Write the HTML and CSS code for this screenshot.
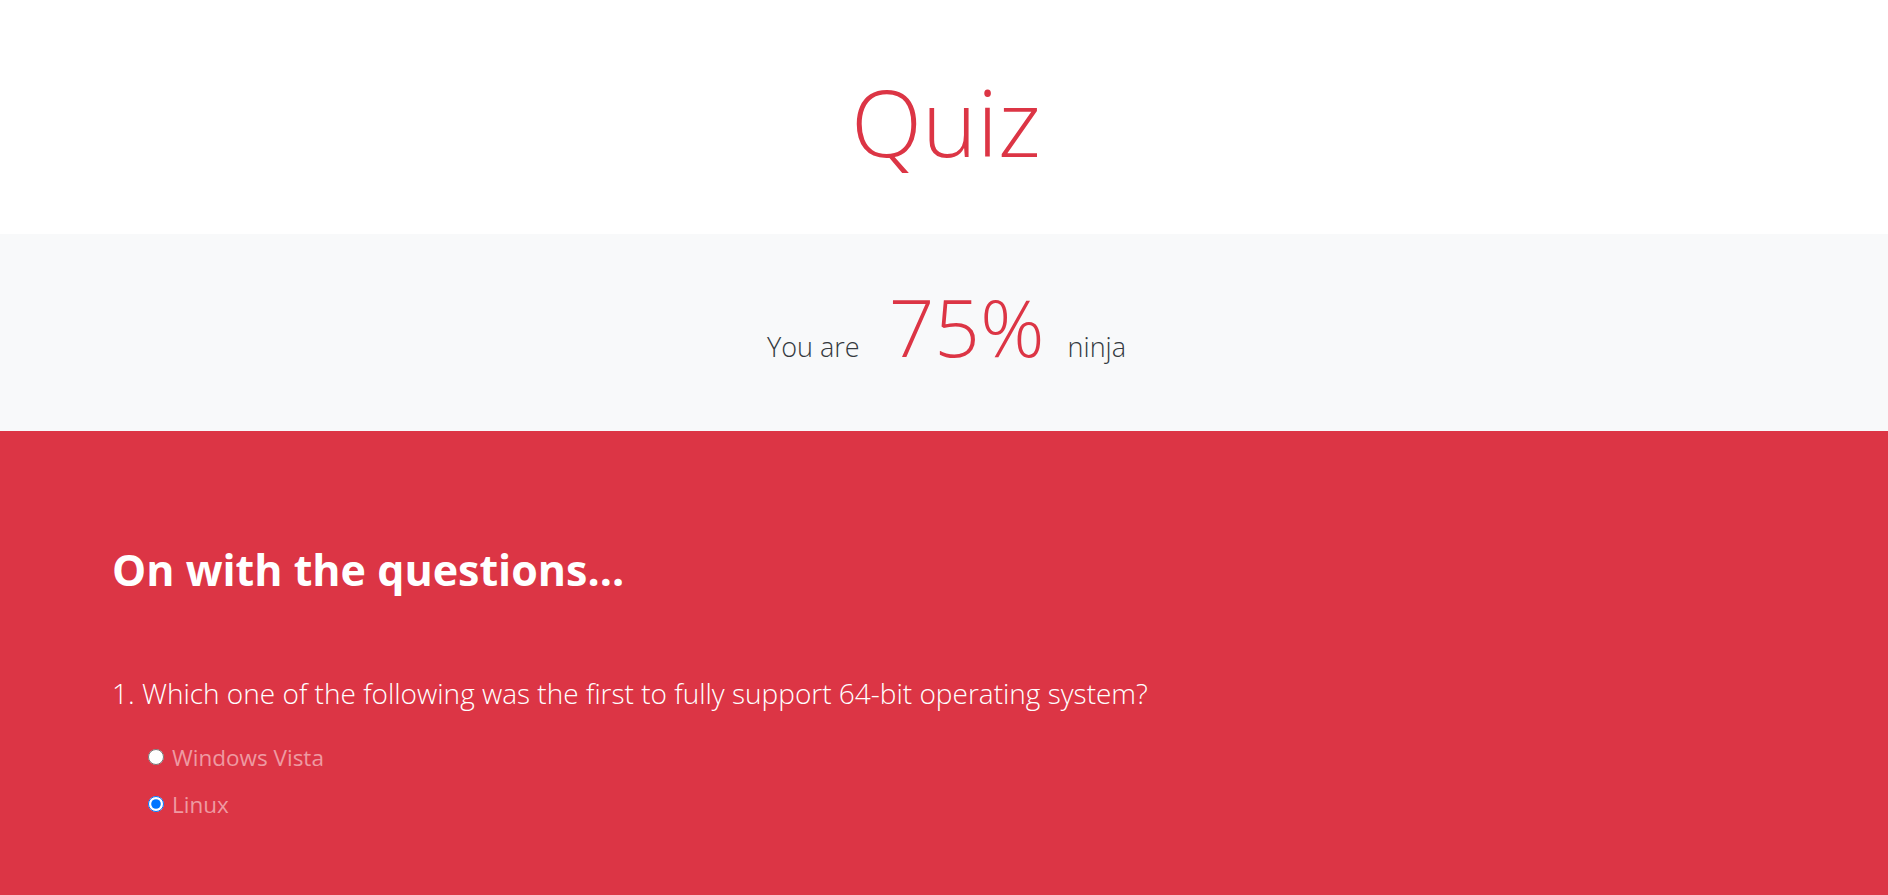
FILE: index.html
```html
<!DOCTYPE html>
<html lang="en">
<head>
<meta charset="utf-8">
<title>Quiz</title>
<link rel="stylesheet" href="styles.css">
</head>
<body>
<header class="hero">
  <h1 class="title">Quiz</h1>
</header>
<section class="score">
  <span class="score-text">You are</span>
  <span class="score-value">75%</span>
  <span class="score-text">ninja</span>
</section>
<main class="questions">
  <h2 class="questions-title">On with the questions...</h2>
  <div class="question">
    <p class="question-text">1. Which one of the following was the first to fully support 64-bit operating system?</p>
    <label class="option"><input type="radio" name="q1"><span>Windows Vista</span></label>
    <label class="option"><input type="radio" name="q1" checked><span>Linux</span></label>
  </div>
</main>
</body>
</html>
```
FILE: styles.css
```css
* { box-sizing: border-box; }
body {
  margin: 0;
  font-family: "Open Sans", "Noto Sans", sans-serif;
  color: #212529;
  background: #dc3545;
}
.hero {
  background: #fff;
  height: 234px;
  padding-top: 66px;
  padding-left: 4px;
  text-align: center;
}
.title {
  margin: 0;
  font-size: 93px;
  font-weight: 300;
  line-height: 1.2;
  color: #dc3545;
}
.score {
  background: #f8f9fa;
  height: 197px;
  display: flex;
  justify-content: center;
  align-items: baseline;
  padding-top: 37px;
  padding-left: 5px;
}
.score-text {
  font-size: 27px;
  font-weight: 300;
  color: #343a40;
}
.score-value {
  font-size: 80px;
  font-weight: 300;
  color: #dc3545;
  margin: 0 23px 0 29px;
}
.questions {
  background: #dc3545;
  color: #fff;
  padding: 113px 112px 60px;
  min-height: 464px;
}
.questions-title {
  margin: 0 0 76px;
  font-size: 43px;
  font-weight: 700;
  line-height: 1.2;
}
.question-text {
  margin: 0 0 20px;
  font-size: 28px;
  font-weight: 300;
  line-height: 1.5;
}
.option {
  display: flex;
  align-items: center;
  gap: 8px;
  margin-left: 36px;
  font-size: 22.5px;
  color: #ee9aa2;
  height: 47px;
}
.option input {
  width: 16px;
  height: 16px;
  margin: 0;
}
```
